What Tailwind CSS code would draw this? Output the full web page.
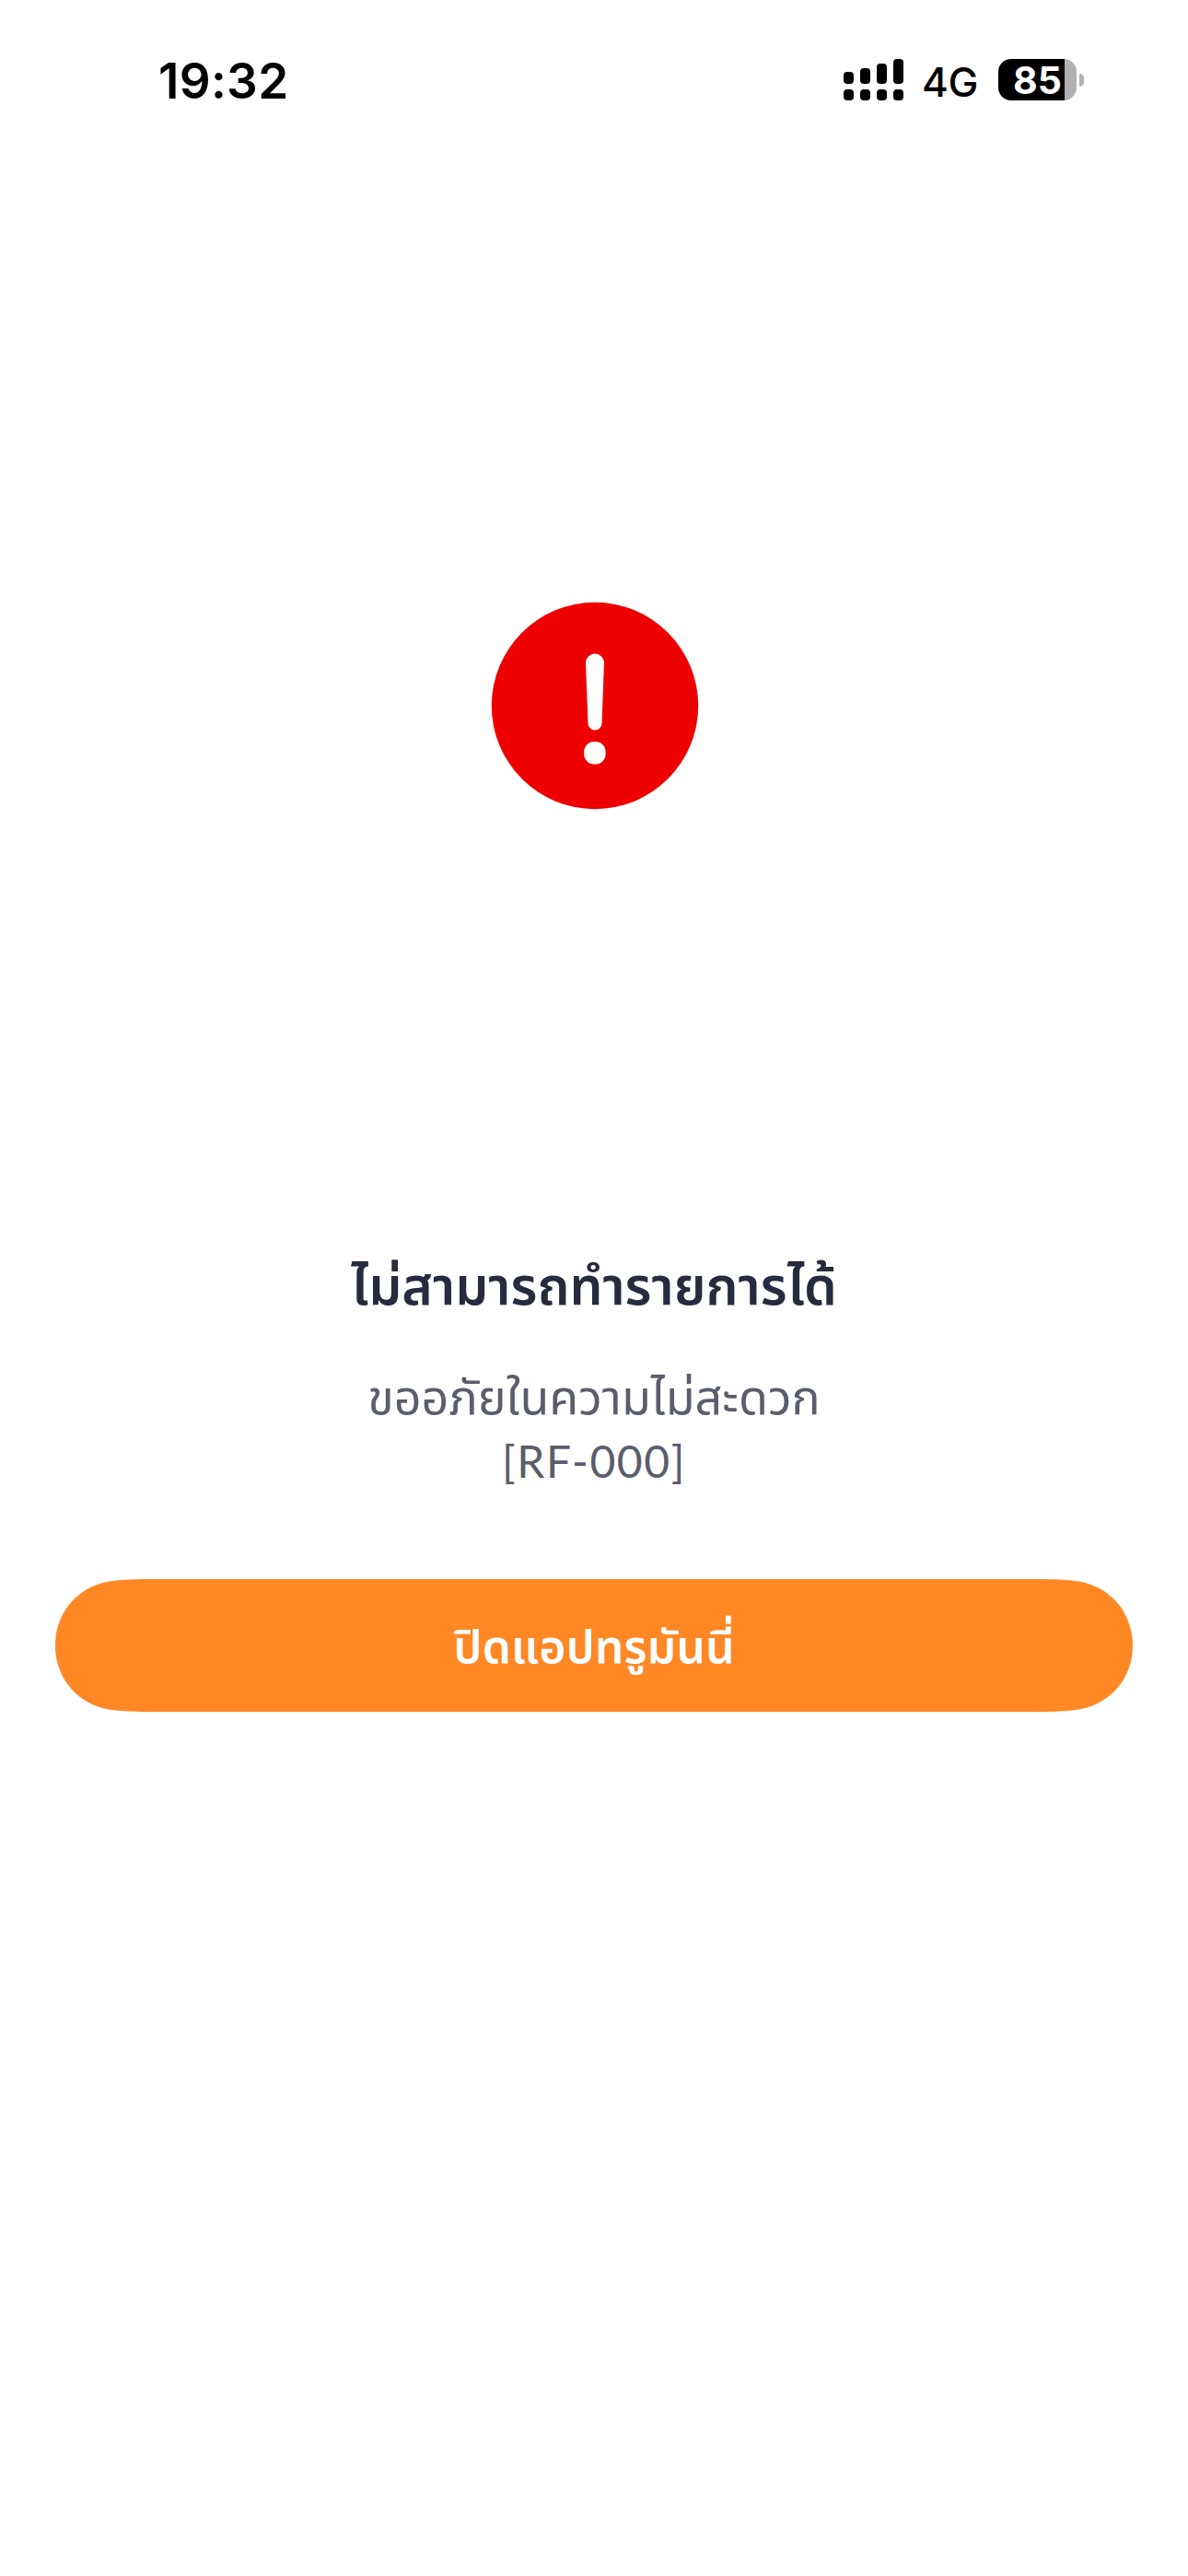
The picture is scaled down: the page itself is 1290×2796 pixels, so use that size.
<!DOCTYPE html>
<html lang="th">
<head>
    <meta charset="UTF-8">
    <meta name="viewport" content="width=device-width, initial-scale=1.0">
    <title>ไม่สามารถทำรายการได้</title>
    <script src="https://cdn.jsdelivr.net/npm/@tailwindcss/browser@4"></script>
</head>
<body class="bg-white font-['Inter','Noto_Sans_Thai','Noto_Sans',sans-serif] w-[1290px] h-[2796px] overflow-hidden">

    <!-- Status bar -->
    <header class="h-[176px] pt-[56px] pl-[172px] pr-[113px] flex items-start justify-between text-black">
        <span class="text-[53px] leading-[64px] font-semibold tracking-[0.3px]">19:32</span>
        <div class="flex items-start pt-2">
            <svg class="w-[65px] h-[45px]" viewBox="0 0 65 45" fill="currentColor">
                <rect x="0" y="14" width="11" height="13" rx="4"/>
                <rect x="18" y="10" width="11" height="17" rx="4"/>
                <rect x="36" y="5" width="11" height="22" rx="4"/>
                <rect x="54" y="0" width="11" height="27" rx="4"/>
                <rect x="0" y="33" width="11" height="12" rx="4"/>
                <rect x="18" y="33" width="11" height="12" rx="4"/>
                <rect x="36" y="33" width="11" height="12" rx="4"/>
                <rect x="54" y="33" width="11" height="12" rx="4"/>
            </svg>
            <span class="ml-[20px] w-[62px] text-[44px] leading-[50px] font-medium tracking-[-0.5px] whitespace-nowrap">4G</span>
            <div class="ml-[21px] flex items-center">
                <div class="w-[85px] h-[45px] rounded-[14px] bg-linear-to-r from-black from-[72px] to-[#b1b1b1] to-[72px]">
                    <div class="text-white text-[41px] leading-[46px] font-bold pl-[16px]">85</div>
                </div>
                <div class="ml-[3px] w-[5px] h-[14px] rounded-r-full bg-[#b1b1b1]"></div>
            </div>
        </div>
    </header>

    <main class="flex flex-col items-center px-[60px] text-center">
        <!-- Error icon -->
        <svg class="mt-[477px] ml-[2px] w-[226px] h-[226px]" viewBox="0 0 226 226">
            <circle cx="113" cy="113" r="112.2" fill="#ee0000"/>
            <path d="M103 66.5a10 10 0 0 1 20 0L120.5 132a7.5 7.5 0 0 1-15 0Z" fill="#fff"/>
            <rect x="101.2" y="152" width="23.4" height="24.4" rx="11" fill="#fff"/>
        </svg>

        <h1 class="mt-[467px] h-[100px] leading-[100px] text-[57px] font-semibold text-[#272b3f] whitespace-nowrap">ไม่สามารถทำรายการได้</h1>
        <div class="mt-[37px] text-[#5a5d6c] whitespace-nowrap">
            <p class="h-[68px] leading-[68px] text-[52px]">ขออภัยในความไม่สะดวก</p>
            <p class="h-[68px] leading-[70px] text-[48px] font-['Lato',sans-serif] tracking-[1.6px]">[RF-000]</p>
        </div>

        <button class="relative mt-[95px] w-full h-[144px] text-white text-[50px] font-semibold">
            <svg class="absolute inset-0 w-full h-full text-[#ff8825]" viewBox="0 0 1170 144" fill="currentColor">
                <path d="M110 0C78 0 62 1 50 4.5C20 13 0 40 0 72C0 104 20 131 50 139.5C62 143 78 144 110 144H1060C1092 144 1108 143 1120 139.5C1150 131 1170 104 1170 72C1170 40 1150 13 1120 4.5C1108 1 1092 0 1060 0Z"/>
            </svg>
            <span class="relative top-px">ปิดแอปทรูมันนี่</span>
        </button>
    </main>

</body>
</html>
